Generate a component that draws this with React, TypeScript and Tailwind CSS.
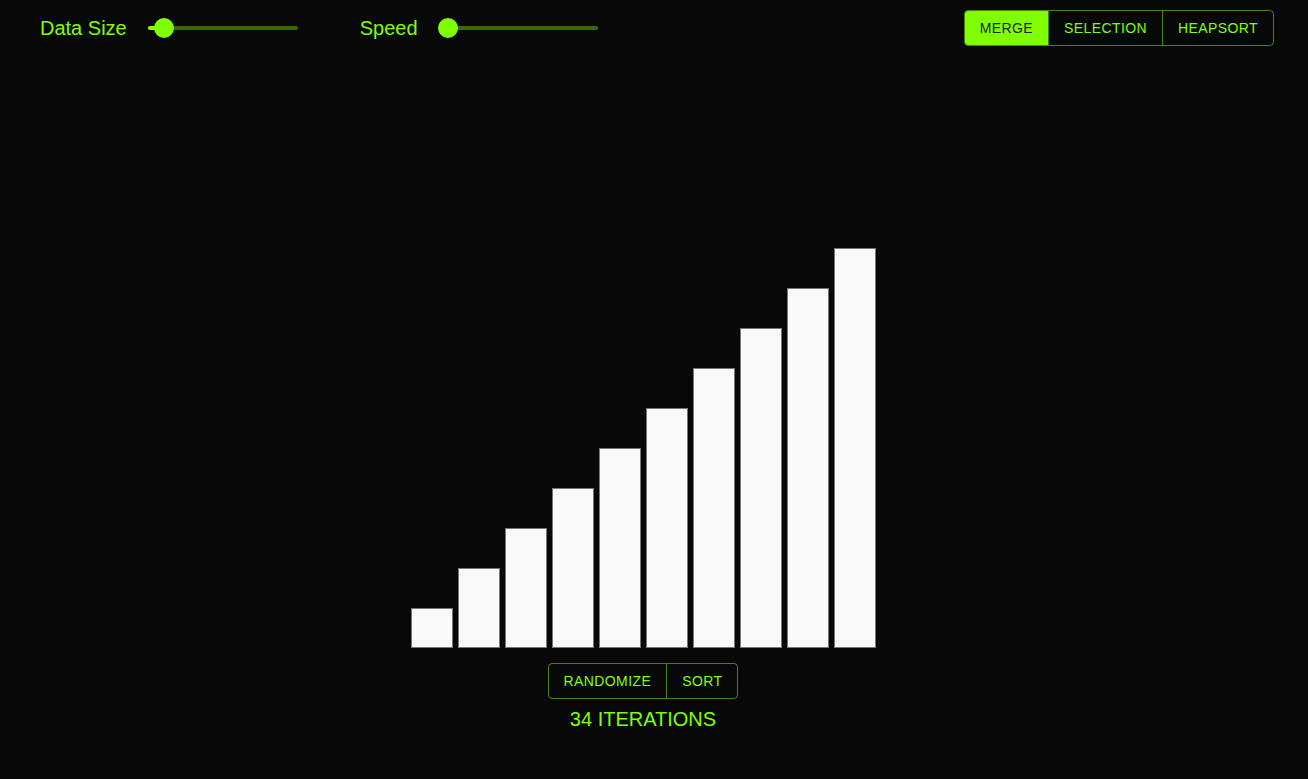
const BARS = [40, 80, 120, 160, 200, 240, 280, 320, 360, 400];

const FONT = { fontFamily: '"Liberation Sans", Arial, sans-serif' };

const Slider = ({ value, className }: { value: number; className?: string }) => (
  <div className={`relative h-[20px] w-[150px] flex items-center ${className ?? ''}`}>
    <div className="h-[4px] w-full rounded-full bg-[#7fff00]/40" />
    <div
      className="absolute left-0 h-[4px] rounded-full bg-[#7fff00]"
      style={{ width: `${value}%` }}
    />
    <div
      className="absolute top-0 h-[20px] w-[20px] -ml-[10px] rounded-full bg-[#7fff00]"
      style={{ left: `${value}%` }}
    />
  </div>
);

const Btn = ({ label, active, first }: { label: string; active?: boolean; first?: boolean }) => (
  <button
    style={FONT}
    className={`px-[15px] text-[14px] tracking-[0.4px] ${first ? '' : 'border-l border-[#7fff00]/50'} ${
      active ? 'rounded-l-[3px] bg-[#7fff00] text-[#222]' : 'text-[#7fff00]'
    }`}
  >
    {label}
  </button>
);

export default function App() {
  return (
    <div className="min-h-[779px] w-full bg-[#080808] text-[#7fff00]" style={FONT}>
      {/* Header */}
      <div className="flex h-[56px] items-center pl-[40px] pr-[34px]">
        <span className="text-[20px] leading-none">Data Size</span>
        <Slider value={10.7} className="ml-[21px]" />
        <span className="ml-[62px] text-[20px] leading-none">Speed</span>
        <Slider value={0} className="ml-[30px]" />

        <div className="ml-auto flex h-[36px] rounded-[4px] border border-[#7fff00]/50">
          <Btn label="MERGE" active first />
          <Btn label="SELECTION" />
          <Btn label="HEAPSORT" />
        </div>
      </div>

      {/* Bars */}
      <div className="flex flex-col items-center pr-[22px]">
        <div className="mt-[192px] flex h-[400px] items-end gap-[5px]">
          {BARS.map((h) => (
            <div
              key={h}
              className="w-[42px] border border-[#777] bg-[#f9f9f9]"
              style={{ height: h }}
            />
          ))}
        </div>

        <div className="mt-[15px] flex h-[36px] rounded-[4px] border border-[#7fff00]/50">
          <Btn label="RANDOMIZE" first />
          <Btn label="SORT" />
        </div>

        <div className="mt-[8px] text-[20px] leading-[24px]">34 ITERATIONS</div>
      </div>
    </div>
  );
}
